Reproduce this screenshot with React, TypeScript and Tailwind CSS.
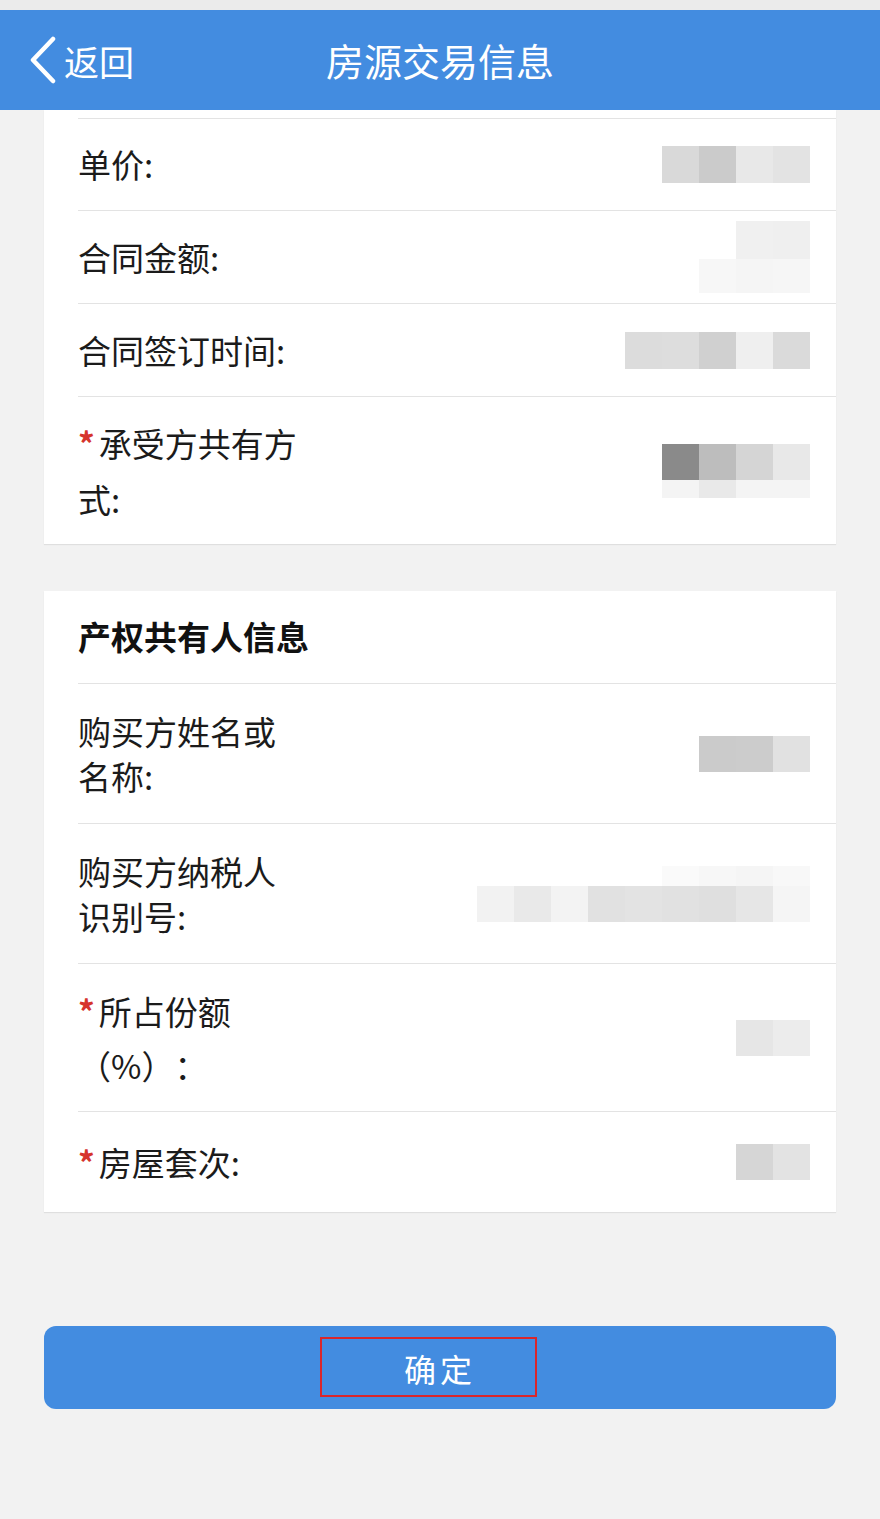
import type { ReactNode } from "react";

const font = { fontFamily: '"Noto Sans CJK SC", "Noto Sans", sans-serif' };

type Cell = { x: number; c: string };
type Strip = { h: number; cells: Cell[] };

// mosaic value blocks, columns are 37px wide, last column ends at x=810
const Mosaic = ({ strips }: { strips: Strip[] }) => {
  const cols = Math.max(...strips.flatMap((s) => s.cells.map((c) => c.x))) + 1;
  return (
    <div className="flex flex-col">
      {strips.map((strip, i) => (
        <div key={i} className="flex justify-end">
          {Array.from({ length: cols }).map((_, col) => {
            const idx = cols - 1 - col;
            const cell = strip.cells.find((c) => c.x === idx);
            return (
              <div
                key={col}
                className="w-[37px]"
                style={{ height: strip.h, background: cell ? cell.c : "transparent" }}
              />
            );
          })}
        </div>
      ))}
    </div>
  );
};

const Star = () => (
  <span className="mr-[4px] inline-block font-bold text-[#d6342c]">*</span>
);

const Row = ({
  label,
  value,
  height,
  leading = "45px"
}: {
  label: ReactNode;
  value: ReactNode;
  height: string;
  leading?: string;
}) => (
  <div
    className={`ml-[34px] flex items-center justify-between border-t border-[#e3e3e3] pr-[26px] ${height}`}
  >
    <div
      className="w-[228px] text-[33px] text-[#1b1b1b] [text-spacing-trim:space-all]"
      style={{ lineHeight: leading }}
    >
      {label}
    </div>
    {value}
  </div>
);

const Chevron = () => (
  <svg width="30" height="48" viewBox="0 0 30 48" fill="none">
    <path d="M25 3 L5 24 L25 45" stroke="white" strokeWidth="4.5" strokeLinecap="round" strokeLinejoin="round" />
  </svg>
);

export default function App() {
  return (
    <div className="min-h-[1519px] w-[880px] bg-[#f2f2f2]" style={font}>
      <div className="h-[10px] bg-[#ebebeb]" />
      <header className="relative flex h-[100px] items-center bg-[#438ce0] text-white">
        <div className="flex items-center pl-[28px]">
          <Chevron />
          <span className="ml-[6px] text-[35px] leading-none">返回</span>
        </div>
        <h1 className="absolute left-0 right-0 text-center text-[38px] font-normal leading-none">
          房源交易信息
        </h1>
      </header>

      <section className="mx-[44px] bg-white shadow-[0_1px_1px_rgba(0,0,0,0.08)]">
        <div className="h-[8px]" />
        <Row
          height="h-[92px]"
          label="单价:"
          value={
            <Mosaic
              strips={[
                { h: 37, cells: [{ x: 3, c: "#d9d9d9" }, { x: 2, c: "#cbcbcb" }, { x: 1, c: "#e8e8e8" }, { x: 0, c: "#e3e3e3" }] }
              ]}
            />
          }
        />
        <Row
          height="h-[93px]"
          label="合同金额:"
          value={
            <Mosaic
              strips={[
                { h: 38, cells: [{ x: 1, c: "#f0f0f0" }, { x: 0, c: "#efefef" }] },
                { h: 34, cells: [{ x: 2, c: "#f7f7f7" }, { x: 1, c: "#f5f5f5" }, { x: 0, c: "#f6f6f6" }] }
              ]}
            />
          }
        />
        <Row
          height="h-[93px]"
          label="合同签订时间:"
          value={
            <Mosaic
              strips={[
                {
                  h: 37,
                  cells: [
                    { x: 4, c: "#dcdcdc" },
                    { x: 3, c: "#dddddd" },
                    { x: 2, c: "#d0d0d0" },
                    { x: 1, c: "#efefef" },
                    { x: 0, c: "#dadada" }
                  ]
                }
              ]}
            />
          }
        />
        <Row
          height="h-[148px]"
          leading="56px"
          label={
            <>
              <Star />
              承受方共有方式:
            </>
          }
          value={
            <Mosaic
              strips={[
                { h: 36, cells: [{ x: 3, c: "#8a8a8a" }, { x: 2, c: "#bdbdbd" }, { x: 1, c: "#d5d5d5" }, { x: 0, c: "#e8e8e8" }] },
                { h: 18, cells: [{ x: 3, c: "#f4f4f4" }, { x: 2, c: "#e9e9e9" }, { x: 1, c: "#f4f4f4" }, { x: 0, c: "#f4f4f4" }] }
              ]}
            />
          }
        />
      </section>

      <section className="mx-[44px] mt-[47px] bg-white shadow-[0_1px_1px_rgba(0,0,0,0.08)]">
        <div className="ml-[34px] flex h-[92px] items-center text-[33px] font-bold text-[#111]">
          产权共有人信息
        </div>
        <Row
          height="h-[140px]"
          label="购买方姓名或名称:"
          value={
            <Mosaic
              strips={[
                { h: 36, cells: [{ x: 2, c: "#cbcbcb" }, { x: 1, c: "#cccccc" }, { x: 0, c: "#e1e1e1" }] }
              ]}
            />
          }
        />
        <Row
          height="h-[140px]"
          label="购买方纳税人识别号:"
          value={
            <Mosaic
              strips={[
                { h: 20, cells: [{ x: 3, c: "#fafafa" }, { x: 2, c: "#f7f7f7" }, { x: 1, c: "#f5f5f5" }, { x: 0, c: "#f8f8f8" }] },
                {
                  h: 36,
                  cells: [
                    { x: 8, c: "#f2f2f2" },
                    { x: 7, c: "#e9e9e9" },
                    { x: 6, c: "#f3f3f3" },
                    { x: 5, c: "#e1e1e1" },
                    { x: 4, c: "#e3e3e3" },
                    { x: 3, c: "#e1e1e1" },
                    { x: 2, c: "#dfdfdf" },
                    { x: 1, c: "#e6e6e6" },
                    { x: 0, c: "#f5f5f5" }
                  ]
                }
              ]}
            />
          }
        />
        <Row
          height="h-[148px]"
          leading="54px"
          label={
            <>
              <Star />
              所占份额（%）：
            </>
          }
          value={
            <Mosaic
              strips={[
                { h: 36, cells: [{ x: 1, c: "#e6e6e6" }, { x: 0, c: "#ececec" }] }
              ]}
            />
          }
        />
        <Row
          height="h-[101px]"
          label={
            <>
              <Star />
              房屋套次:
            </>
          }
          value={
            <Mosaic
              strips={[
                { h: 36, cells: [{ x: 1, c: "#d6d6d6" }, { x: 0, c: "#e3e3e3" }] }
              ]}
            />
          }
        />
      </section>

      <div className="mx-[44px] mt-[114px]">
        <button
          type="button"
          className="relative flex h-[83px] w-full items-center justify-center rounded-[12px] bg-[#438ce0] text-[32px] tracking-[4px] text-white"
        >
          确定
          <span className="absolute left-[276px] top-[11px] h-[60px] w-[217px] border-2 border-[#d9262b]" />
        </button>
      </div>
    </div>
  );
}
